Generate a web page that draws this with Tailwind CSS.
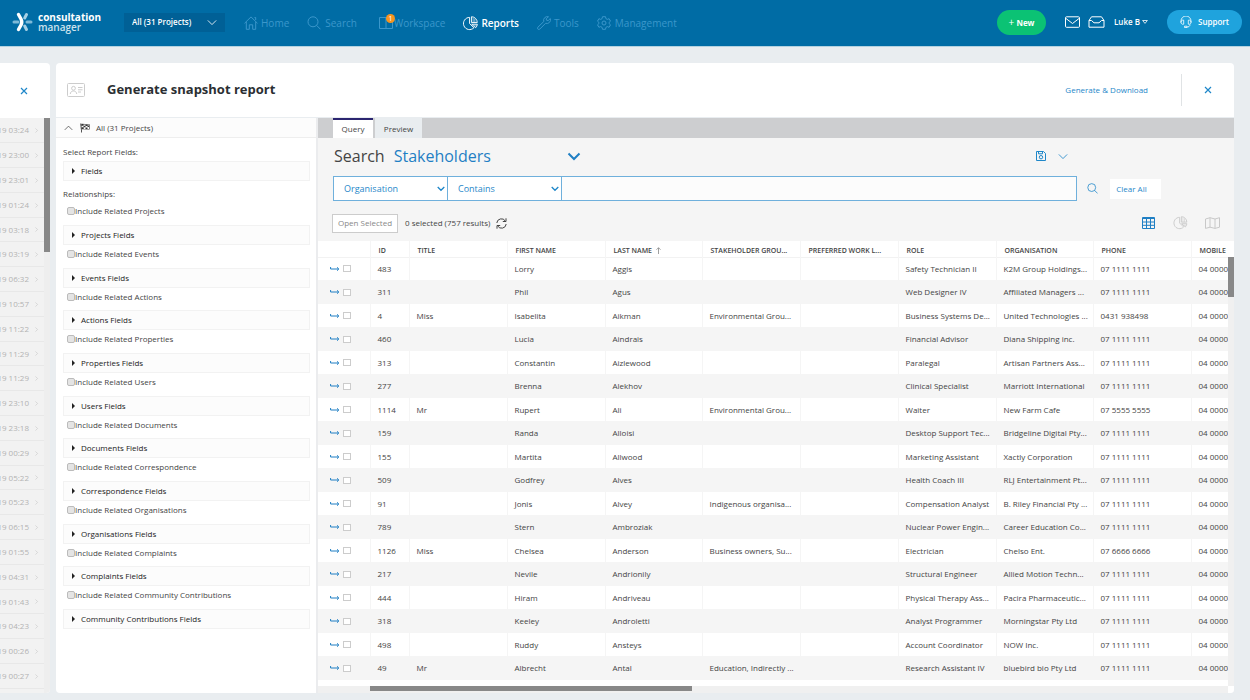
<!DOCTYPE html>
<html lang="en">
  <head>
    <meta charset="UTF-8" />
    <meta name="viewport" content="width=device-width, initial-scale=1.0" />
    <title>Generate snapshot report</title>
    <script src="https://cdn.jsdelivr.net/npm/@tailwindcss/browser@4"></script>
  </head>

  <body class="h-screen flex flex-col overflow-hidden bg-[#e9edf0] font-['Open_Sans',sans-serif] text-[8px] text-[#444]">
    <!-- Shared icons -->
    <svg class="hidden">
      <symbol id="chevron" viewBox="0 0 12 8"><path d="M1 1.5l5 5 5-5" fill="none" stroke="currentColor" /></symbol>
      <symbol id="close" viewBox="0 0 8 8"><path d="M1 1l6 6M7 1L1 7" fill="none" stroke="currentColor" stroke-width="1.2" /></symbol>
      <symbol id="search" viewBox="0 0 14 14"><circle cx="6" cy="5.8" r="5" fill="none" stroke="currentColor" /><path d="M9.6 9.4l3.9 3.9" fill="none" stroke="currentColor" /></symbol>
      <symbol id="pie" viewBox="0 0 16 16">
        <g fill="none" stroke="currentColor" stroke-linejoin="round">
          <path d="M7 1.5a6.5 6.5 0 1 0 4.6 11.1L7 8z" />
          <path d="M9 .8V7h6.2A6.2 6.2 0 0 0 9 .8z" />
          <path d="M9.3 8.8h6a6 6 0 0 1-1.8 3.7z" />
          <path d="M10.8 2v5M12.6 3v4M11.5 10.5h3" stroke-width=".6" />
        </g>
      </symbol>
      <symbol id="open" viewBox="0 0 10 6"><path d="M.6 1v2h8M7 1.3L8.8 3 7 4.7" fill="none" stroke="currentColor" /></symbol>
    </svg>

    <!-- Top bar -->
    <header class="h-[47px] shrink-0 flex items-center pl-3 pr-2 pb-0.5 bg-[#006ca5] border-b border-[#b4d2e0] text-white">
      <a href="#" class="w-28 flex items-center gap-[5px]">
        <svg class="w-[21px] h-5" viewBox="0 0 21 20" fill="none" stroke-linecap="round">
          <path d="M2 10h4M15 10h4" stroke="#7db9d8" stroke-width="3" />
          <path d="M14.500 2.500l-1.800 3.500M12.700 14l1.800 3.500" stroke="#a5cfe4" stroke-width="3" />
          <path d="M6.500 2.500l2.500 4.500q1.600 3 0 6l-2.500 4.500" stroke="#fff" stroke-width="3.400" />
        </svg>
        <span class="leading-[10px] text-[10px]">
          <b class="block">consultation</b>
          <span class="block font-semibold text-[#cce2ed]">manager</span>
        </span>
      </a>

      <label class="relative block w-[101px]">
        <select aria-label="Project" class="appearance-none w-full h-[19px] pl-2 bg-[#006096] font-semibold text-[8px]">
          <option>All (31 Projects)</option>
        </select>
        <svg class="absolute right-2 top-1.5 w-[10px] h-[7px] pointer-events-none"><use href="#chevron" /></svg>
      </label>

      <nav class="flex items-center gap-[18px] ml-[19px] pt-0.5 text-[10px] text-[#3b97cb]">
        <a href="#" class="flex items-center gap-[3px]">
          <svg class="w-[14px] h-[14px]" viewBox="0 0 14 14" fill="none" stroke="currentColor"><path d="M.5 7.300L7 .9l6.500 6.400M2.300 6v7.300h3V8.800h3.400v4.500h3V6M10.500 1.500h1.200v2.500" /></svg>
          Home
        </a>
        <a href="#" class="flex items-center gap-1">
          <svg class="w-[14px] h-[14px]"><use href="#search" /></svg>
          Search
        </a>
        <a href="#" class="relative ml-1 flex items-center">
          <svg class="w-[15px] h-[14px]" viewBox="0 0 15 14" fill="none" stroke="currentColor"><path d="M.5 1.500h13v11H.5zM7 1.500v11" /></svg>
          Workspace
          <span class="absolute left-[7px] -top-0.5 size-[9px] rounded-full bg-[#f7941e] text-white text-[7px] leading-[9px] text-center">1</span>
        </a>
        <a href="#" class="flex items-center gap-[3px] font-semibold text-white">
          <svg class="w-[15px] h-[15px]"><use href="#pie" /></svg>
          Reports
        </a>
        <a href="#" class="flex items-center gap-[3px]">
          <svg class="w-[14px] h-[14px]" viewBox="0 0 14 14" fill="none" stroke="currentColor" stroke-linejoin="round"><path d="M11.500.8a3.700 3.700 0 0 0-4.700 4.700L.9 11.200a1.300 1.300 0 0 0 1.900 1.900l5.800-5.800a3.700 3.700 0 0 0 4.700-4.800l-2.100 2.100-1.700-.4-.3-1.500z" /></svg>
          Tools
        </a>
        <a href="#" class="flex items-center gap-1">
          <svg class="w-[14px] h-[14px]" viewBox="0 0 14 14" fill="none" stroke="currentColor" stroke-linejoin="round"><path d="M5.500.7h3l.4 1.900 1.400.8 1.800-.7 1.400 2.500-1.400 1.200v1.200l1.400 1.200-1.400 2.500-1.800-.7-1.400.8-.4 1.900h-3l-.4-1.900-1.400-.8-1.800.7L.5 8.800l1.400-1.200V6.400L.5 5.200l1.400-2.500 1.800.7 1.400-.8z" /><circle cx="7" cy="7" r="2" /></svg>
          Management
        </a>
      </nav>

      <div class="ml-auto flex items-center font-semibold">
        <button class="w-[49px] h-[25px] rounded-full bg-[#0bc274] font-bold"><span class="font-normal text-[10px]">+</span> New</button>
        <a href="#" aria-label="Mail" class="ml-[19px]">
          <svg class="w-[15px] h-3" viewBox="0 0 15 12" fill="none" stroke="currentColor"><rect x=".5" y=".8" width="14" height="10.500" rx="1" /><path d="M1 2.500l6.500 5 6.500-5" /></svg>
        </a>
        <a href="#" aria-label="Inbox" class="ml-2">
          <svg class="w-[17px] h-3" viewBox="0 0 17 12" fill="none" stroke="currentColor" stroke-linejoin="round"><path d="M3.500.8h10L16 4.500v6.700H1V4.500zM1 4.500h2.500l2.500 2.300h5l2.500-2.300H16" /></svg>
        </a>
        <button class="ml-[9px] flex items-center gap-0.5">Luke B
          <svg class="w-[6px] h-1" viewBox="0 0 6 4" fill="none" stroke="currentColor" stroke-width=".8"><path d="M.6.5h4.800L3 3.400z" /></svg>
        </button>
        <button class="ml-[19px] w-[75px] h-6 rounded-full bg-[#1fa3dd] flex items-center justify-center gap-[6px]">
          <svg class="w-3 h-3" viewBox="0 0 12 12" fill="none" stroke="currentColor" stroke-width=".8"><path d="M1 6.500V5a5 5 0 0 1 10 0v1.500M2.200 4.200h1.500v4H2.200C.5 7.500.5 5 2.200 4.200zM9.800 4.200H8.300v4h1.500c1.700-.7 1.700-3.300 0-4zM10 8.500c0 2-1.500 2.500-3 2.500M4.500 10.200H7v1.300H4.500z" /></svg>
          Support
        </button>
      </div>
    </header>

    <div class="flex-1 min-h-0 flex gap-[6px] pt-4 pr-4 pb-[7px]">
      <!-- Previous panel, mostly off to the left -->
      <aside class="w-[50px] shrink-0 flex flex-col rounded-r overflow-hidden bg-white">
        <div class="h-[55px] shrink-0 flex items-center pl-5 text-[#1f87c9]">
          <button aria-label="Close panel"><svg class="size-2"><use href="#close" /></svg></button>
        </div>
        <div class="flex-1 min-h-0 flex bg-[#eee]">
          <ul id="dates" class="w-11 overflow-hidden bg-[#f2f2f2] text-[#b3b3b3]"></ul>
          <div class="flex-1"><div class="h-[134px] bg-[#888]"></div></div>
        </div>
      </aside>

      <!-- Report panel -->
      <main class="flex-1 min-w-0 flex flex-col rounded overflow-hidden bg-white">
        <div class="h-[55px] shrink-0 flex items-center pl-[11px] border-b border-[#e9edf0]">
          <svg class="w-[18px] h-[14px] text-[#ccc]" viewBox="0 0 18 14" fill="none" stroke="currentColor"><rect x=".5" y=".5" width="17" height="13" rx="1" /><circle cx="6.500" cy="5.300" r="1.900" /><path d="M3.300 11c0-4 6.400-4 6.400 0M11 4.500h4.500M11 6.800h4.500M11 9h3" /></svg>
          <h1 class="ml-[22px] text-[13px] font-bold text-[#2b2f33]">Generate snapshot report</h1>
          <a href="#" class="ml-auto text-[#1f87c9]">Generate &amp; Download</a>
          <div class="ml-[33px] h-8 w-px bg-[#e0e3e5]"></div>
          <button aria-label="Close report" class="w-[52px] flex justify-center text-[#1f87c9]"><svg class="size-2"><use href="#close" /></svg></button>
        </div>

        <div class="flex-1 min-h-0 flex">
          <!-- Field picker -->
          <section class="w-[262px] shrink-0 border-r-2 border-[#ebecee]">
            <button class="w-full h-5 flex items-center pl-2 bg-[#fcfcfc] border-b border-[#eee]">
              <svg class="w-[9px] h-[6px] rotate-180"><use href="#chevron" /></svg>
              <svg class="ml-[7px] w-[10px] h-[10px]" viewBox="0 0 10 10" fill="#333"><path d="M.3.500h.9l.8 9H1.200zM1.500 1h2v1.700h-2zM5.500 1.300h2V3h-2zM3.500 2.700h2v1.600h-2zM7.500 2.500h2v1.600h-2zM1.800 4.300h1.900v1.700H1.800zM5.500 4.500h2v1.700h-2zM1.500.800l8 .4v.5l-8-.4zM9 1.200h.6v5.300l-7.600-.2v-.5l7 .2z" /></svg>
              <span class="ml-[6px]">All (31 Projects)</span>
            </button>
            <div class="pl-[7px] pr-[6px]">
              <h2 class="h-[23px] pt-2 leading-3">Select Report Fields:</h2>
              <button class="w-full h-5 flex items-center gap-[6px] pl-2 bg-[#fcfcfc] border border-[#f2f2f2] text-[#222]"><span class="w-[3px] border-y-[3px] border-l-[3px] border-y-transparent border-l-[#222]"></span>Fields</button>
              <h2 class="h-[23px] pt-[7px] leading-3">Relationships:</h2>
              <div id="relations"></div>
            </div>
          </section>

          <!-- Query -->
          <section class="flex-1 min-w-0 flex flex-col bg-[#f5f5f5]">
            <div class="h-5 shrink-0 flex gap-0.5 pl-[15px] bg-[#cdced0]">
              <button class="w-10 border-t-2 border-[#2b2570] bg-white">Query</button>
              <button class="w-[47px] pt-0.5 bg-[#e9edf0]">Preview</button>
            </div>

            <div class="h-[38px] shrink-0 flex items-center pl-4 pr-[166px] pb-0.5 text-[16px]">
              <label for="entity">Search</label>
              <div class="relative ml-[9px] w-[187px] text-[#1f7fc4]">
                <select id="entity" class="appearance-none w-full">
                  <option>Stakeholders</option>
                </select>
                <svg class="absolute right-0 top-2 w-[14px] h-[9px] stroke-2 pointer-events-none" viewBox="0 0 14 9" fill="none" stroke="currentColor"><path d="M1.500 1.500L7 7l5.500-5.500" /></svg>
              </div>
              <button aria-label="Save search" class="ml-auto text-[#1f87c9]">
                <svg class="w-[10px] h-[10px]" viewBox="0 0 10 10" fill="none" stroke="currentColor"><path d="M.5.500h7l2 2v7h-9zM2.500.500v2.300h4V.500" /><circle cx="5" cy="6.200" r="1.700" /></svg>
              </button>
              <button aria-label="Saved searches" class="ml-3 text-[#1f87c9]"><svg class="w-[10px] h-[7px]"><use href="#chevron" /></svg></button>
            </div>

            <div class="shrink-0 flex items-center pl-[15px] pr-[73px] text-[#1f87c9]">
              <div class="flex-1 h-[25px] flex border border-[#6fb0dc] bg-[#fcfcfc] divide-x divide-[#6fb0dc] text-[9px]">
                <div class="relative w-[114px] bg-white">
                  <select aria-label="Field" class="appearance-none w-full h-full pl-[10px]">
                    <option>Organisation</option>
                  </select>
                  <svg class="absolute right-[2px] top-[9px] w-2 h-[6px] pointer-events-none" viewBox="0 0 8 6" fill="none" stroke="currentColor" stroke-width="1.3"><path d="M.7 1L4 4.300 7.300 1" /></svg>
                </div>
                <div class="relative w-[114px] bg-white">
                  <select aria-label="Operator" class="appearance-none w-full h-full pl-[10px]">
                    <option>Contains</option>
                  </select>
                  <svg class="absolute right-[2px] top-[9px] w-2 h-[6px] pointer-events-none" viewBox="0 0 8 6" fill="none" stroke="currentColor" stroke-width="1.3"><path d="M.7 1L4 4.300 7.300 1" /></svg>
                </div>
                <input type="text" aria-label="Value" class="flex-1 min-w-0 px-2" />
              </div>
              <button aria-label="Run search" class="ml-[10px]"><svg class="w-[11px] h-[11px]"><use href="#search" /></svg></button>
              <button class="ml-3 w-[51px] h-5 pr-2 bg-white">Clear All</button>
            </div>

            <div class="h-10 shrink-0 flex items-center pt-1 pl-[14px] pr-[14px]">
              <button disabled class="w-[66px] h-[19px] border border-[#ccc] bg-white text-[#888]">Open Selected</button>
              <span class="ml-[7px]">0 selected (757 results)</span>
              <button aria-label="Refresh" class="ml-[6px]">
                <svg class="w-[11px] h-[11px]" viewBox="0 0 11 11" fill="none" stroke="currentColor"><path d="M.8 5A4.600 4.600 0 0 1 9.300 3M10.200 6a4.600 4.600 0 0 1-8.500 2M10 .3v3.200H6.800M1 10.700V7.500h3.200" /></svg>
              </button>
              <button aria-label="Table view" class="ml-auto text-[#1f7fc4]">
                <svg class="w-[13px] h-3" viewBox="0 0 13 12" fill="none" stroke="currentColor"><path d="M.5.500h12v11H.5zM.5 1.500h12M.5 5h12M.5 8.300h12M4.500 1v10.500M8.500 1v10.500" /></svg>
              </button>
              <button aria-label="Chart view" class="ml-[18px] text-[#c8c8c8]"><svg class="w-[15px] h-[14px]"><use href="#pie" /></svg></button>
              <button aria-label="Map view" class="ml-[17px] text-[#c8c8c8]">
                <svg class="w-[15px] h-3" viewBox="0 0 15 12" fill="none" stroke="currentColor"><path d="M.5 2L5 .7l5 1.300L14.500.7v9.500L10 11.400 5 10.200.5 11.400zM5 .7v9.500M10 2v9.400" /></svg>
              </button>
            </div>

            <div class="relative flex-1 min-h-0 overflow-hidden bg-white">
              <table class="w-[971px] table-fixed border-collapse">
                <colgroup>
                  <col class="w-[52px]" /><col class="w-[39px]" /><col class="w-[98px]" /><col class="w-[98px]" /><col class="w-[97px]" /><col class="w-[98px]" />
                  <col class="w-[98px]" /><col class="w-[98px]" /><col class="w-[97px]" /><col class="w-[98px]" /><col class="w-[98px]" />
                </colgroup>
                <thead>
                  <tr id="headings" class="h-4 border-b border-[#f2f2f2] text-left text-[7px] leading-[8px]"></tr>
                </thead>
                <tbody id="rows"></tbody>
              </table>
              <!-- Scroll bars -->
              <div class="absolute right-0 top-4 bottom-[7px] w-[6px] bg-[#f0f0f0]"><div class="h-10 bg-[#888]"></div></div>
              <div class="absolute left-0 right-[6px] bottom-0 h-[7px] pl-[52px] pb-0.5 bg-[#f0f0f0]"><div class="h-[5px] w-[322px] bg-[#888]"></div></div>
            </div>
          </section>
        </div>
      </main>
    </div>

    <script>
      const dates = ["03:24", "23:00", "23:01", "01:24", "03:18", "03:19", "06:32", "10:57", "11:22", "11:29", "11:29", "23:10", "23:18", "00:29", "05:22", "05:23", "06:15", "01:55", "04:31", "01:43", "04:23", "00:26", "00:27", ""];
      document.getElementById("dates").innerHTML = dates
        .map((time) => `
          <li class="h-[25px] nth-[5n]:h-6 flex items-center gap-[5px] border-b border-[#e8e8e8] whitespace-nowrap">
            ${time && `<span class="w-[29px] flex justify-end">19 ${time}</span><svg class="shrink-0 w-[5px] h-[5px] -rotate-90"><use href="#chevron" /></svg>`}
          </li>`)
        .join("");

      const relations = ["Projects", "Events", "Actions", "Properties", "Users", "Documents", "Correspondence", "Organisations", "Complaints", "Community Contributions"];
      document.getElementById("relations").innerHTML = relations
        .map((name) => `
          <div class="h-[43px] nth-[3n]:h-[42px] flex flex-col justify-between pt-px pb-0.5">
            <label class="flex items-center pl-1 h-3">
              <input type="checkbox" class="appearance-none size-2 rounded-[2px] border border-[#bbb] bg-[#e4e4e4]" />Include Related ${name}
            </label>
            <button class="w-full h-5 flex items-center gap-[6px] pl-2 bg-[#fcfcfc] border border-[#f2f2f2] text-[#222]"><span class="w-[3px] border-y-[3px] border-l-[3px] border-y-transparent border-l-[#222]"></span>${name} Fields</button>
          </div>`)
        .join("");

      const headings = ["", "ID", "TITLE", "FIRST NAME", "LAST NAME", "STAKEHOLDER GROU...", "PREFERRED WORK L...", "ROLE", "ORGANISATION", "PHONE", "MOBILE"];
      document.getElementById("headings").innerHTML = headings
        .map((h) => `
          <th class="pl-2 pt-1 border-r border-[#f5f5f5] font-semibold whitespace-nowrap">
            <div class="flex items-center gap-1">${h}${h === "LAST NAME" ? '<svg class="w-[5px] h-[7px] text-[#888]" viewBox="0 0 5 7" fill="none" stroke="currentColor" stroke-width=".8"><path d="M2.5 7V.8M.5 2.700L2.500.7l2 2" /></svg>' : ""}</div>
          </th>`)
        .join("");

      // id, title, first name, last name, group, role, organisation, phone
      const people = [
        [483, "", "Lorry", "Aggis", "", "Safety Technician II", "K2M Group Holdings...", "07 1111 1111"],
        [311, "", "Phil", "Agus", "", "Web Designer IV", "Affiliated Managers ...", "07 1111 1111"],
        [4, "Miss", "Isabelita", "Aikman", "Environmental Grou...", "Business Systems De...", "United Technologies ...", "0431 938498"],
        [460, "", "Lucia", "Aindrais", "", "Financial Advisor", "Diana Shipping inc.", "07 1111 1111"],
        [313, "", "Constantin", "Aizlewood", "", "Paralegal", "Artisan Partners Ass...", "07 1111 1111"],
        [277, "", "Brenna", "Alekhov", "", "Clinical Specialist", "Marriott International", "07 1111 1111"],
        [1114, "Mr", "Rupert", "Ali", "Environmental Grou...", "Waiter", "New Farm Cafe", "07 5555 5555"],
        [159, "", "Randa", "Alloisi", "", "Desktop Support Tec...", "Bridgeline Digital Pty...", "07 1111 1111"],
        [155, "", "Martita", "Allwood", "", "Marketing Assistant", "Xactly Corporation", "07 1111 1111"],
        [509, "", "Godfrey", "Alves", "", "Health Coach III", "RLJ Entertainment Pt...", "07 1111 1111"],
        [91, "", "Jonis", "Alvey", "Indigenous organisa...", "Compensation Analyst", "B. Riley Financial Pty ...", "07 1111 1111"],
        [789, "", "Stern", "Ambroziak", "", "Nuclear Power Engin...", "Career Education Co...", "07 1111 1111"],
        [1126, "Miss", "Chelsea", "Anderson", "Business owners, Su...", "Electrician", "Chelso Ent.", "07 6666 6666"],
        [217, "", "Nevile", "Andrionily", "", "Structural Engineer", "Allied Motion Techn...", "07 1111 1111"],
        [444, "", "Hiram", "Andriveau", "", "Physical Therapy Ass...", "Pacira Pharmaceutic...", "07 1111 1111"],
        [318, "", "Keeley", "Androletti", "", "Analyst Programmer", "Morningstar Pty Ltd", "07 1111 1111"],
        [498, "", "Ruddy", "Ansteys", "", "Account Coordinator", "NOW Inc.", "07 1111 1111"],
        [49, "Mr", "Albrecht", "Antal", "Education, Indirectly ...", "Research Assistant IV", "bluebird bio Pty Ltd", "07 1111 1111"],
      ];
      document.getElementById("rows").innerHTML = people
        .map(([id, title, first, last, group, role, org, phone]) => `
          <tr class="h-[23px] even:h-6 even:bg-[#f5f5f5]">
            <td class="pl-3 border-r border-[#f5f5f5]">
              <div class="flex items-center gap-[3px]">
                <a href="#" aria-label="Open ${id}" class="text-[#1f7fc4]"><svg class="w-[10px] h-[6px]"><use href="#open" /></svg></a>
                <input type="checkbox" aria-label="Select ${id}" class="appearance-none w-2 h-[7px] border border-[#ccc] bg-white" />
              </div>
            </td>
            ${[id, title, first, last, group, "", role, org, phone, "04 0000"]
              .map((cell) => `<td class="pl-[7px] border-r border-[#f5f5f5] whitespace-nowrap">${cell}</td>`)
              .join("")}
          </tr>`)
        .join("");
    </script>
  </body>
</html>
